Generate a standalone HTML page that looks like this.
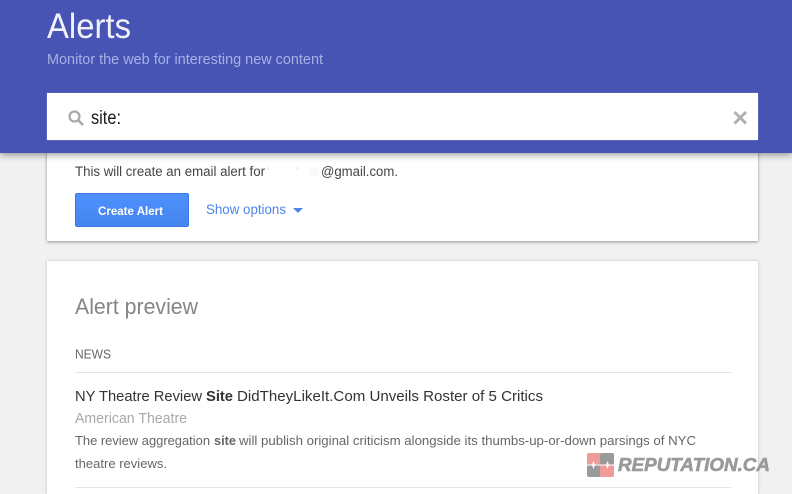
<!DOCTYPE html>
<html><head><meta charset="utf-8"><style>
html,body{margin:0;padding:0;width:792px;height:494px;overflow:hidden;background:#f1f1f1}
body{position:relative;font-family:"Liberation Sans",sans-serif}
.a{position:absolute}
svg{position:absolute;left:0;top:0;overflow:hidden}
text{font-family:"Liberation Sans",sans-serif}
</style></head><body>
<div class="a" style="left:47px;top:140px;width:711px;height:101px;background:#fff;box-shadow:0 1px 3px rgba(0,0,0,.4)"></div>
<div class="a" style="left:47px;top:261px;width:711px;height:233px;background:#fff;box-shadow:0 0 3px rgba(0,0,0,.22)"></div>
<div class="a" style="left:0;top:0;width:792px;height:153px;background:#4854b4;box-shadow:0 2px 7px rgba(0,0,0,.4)"></div>
<div class="a" style="left:47px;top:93px;width:711px;height:47px;background:#fff;box-shadow:0 0 1px rgba(255,255,255,.5)"></div>
<div class="a" style="left:75px;top:193px;width:112px;height:32px;background:linear-gradient(#4d90fe,#4585ef);border:1px solid #3b78e7;border-radius:2px"></div>
<div class="a" style="left:75px;top:372px;width:656px;height:1px;background:#e5e5e5"></div>
<div class="a" style="left:75px;top:487px;width:656px;height:1px;background:#e5e5e5"></div>
<svg width="792" height="494" viewBox="0 0 792 494">
<text x="47" y="38" font-size="35" fill="#f0f1fa" textLength="84" lengthAdjust="spacingAndGlyphs">Alerts</text>
<text x="47" y="64" font-size="15" fill="#a6b2e4" textLength="276" lengthAdjust="spacingAndGlyphs">Monitor the web for interesting new content</text>
<circle cx="74.500" cy="116.500" r="5" fill="none" stroke="#a8a8a8" stroke-width="2.200"/>
<path d="M78 120L83 125" stroke="#a8a8a8" stroke-width="2.600" fill="none"/>
<text x="91" y="124" font-size="19" fill="#1a1a1a" textLength="30" lengthAdjust="spacingAndGlyphs">site:</text>
<path d="M734.500 112L746 123.500M746 112L734.500 123.500" stroke="#b0b0b0" stroke-width="3" fill="none"/>
<text x="75" y="176" font-size="13.500" fill="#444" textLength="190" lengthAdjust="spacingAndGlyphs">This will create an email alert for</text>
<rect x="267" y="167" width="2" height="3" fill="#eee"/>
<rect x="296" y="167" width="3" height="3" fill="#f1f1f1"/>
<rect x="310" y="167" width="9" height="9" fill="#f9f9f9"/>
<text x="321" y="176" font-size="13.500" fill="#444" textLength="77" lengthAdjust="spacingAndGlyphs">@gmail.com.</text>
<text x="98" y="215" font-size="12" font-weight="700" fill="#fff" textLength="65" lengthAdjust="spacingAndGlyphs">Create Alert</text>
<text x="206" y="214" font-size="13.500" fill="#4d85e8" textLength="80" lengthAdjust="spacingAndGlyphs">Show options</text>
<path d="M293 208H303L298 213Z" fill="#4d85e8"/>
<text x="75" y="314" font-size="22.500" fill="#858585" textLength="123" lengthAdjust="spacingAndGlyphs">Alert preview</text>
<text x="75" y="358.500" font-size="12.500" fill="#666" textLength="36" lengthAdjust="spacingAndGlyphs">NEWS</text>
<text x="75" y="401" font-size="15" fill="#333" textLength="127" lengthAdjust="spacingAndGlyphs">NY Theatre Review</text>
<text x="206" y="401" font-size="15" font-weight="700" fill="#333" textLength="27" lengthAdjust="spacingAndGlyphs">Site</text>
<text x="237" y="401" font-size="15" fill="#333" textLength="306" lengthAdjust="spacingAndGlyphs">DidTheyLikeIt.Com Unveils Roster of 5 Critics</text>
<text x="75" y="423" font-size="14.500" fill="#a8a8a8" textLength="112" lengthAdjust="spacingAndGlyphs">American Theatre</text>
<text x="75" y="445" font-size="13" fill="#666" textLength="135" lengthAdjust="spacingAndGlyphs">The review aggregation</text>
<text x="214" y="445" font-size="13" font-weight="700" fill="#666" textLength="22" lengthAdjust="spacingAndGlyphs">site</text>
<text x="239" y="445" font-size="13" fill="#666" textLength="457" lengthAdjust="spacingAndGlyphs">will publish original criticism alongside its thumbs-up-or-down parsings of NYC</text>
<text x="75" y="468" font-size="13" fill="#666" textLength="92" lengthAdjust="spacingAndGlyphs">theatre reviews.</text>
<rect x="587" y="453" width="14" height="12" rx="2" fill="#f09b98"/>
<rect x="600" y="453" width="14" height="12" rx="2" fill="#9a9a9a"/>
<rect x="587" y="465" width="14" height="12" rx="2" fill="#9a9a9a"/>
<rect x="600" y="465" width="14" height="12" rx="2" fill="#f09b98"/>
<path d="M587 465H614" stroke="#fff" stroke-width="1"/>
<path d="M593.500 461L595 465L593.500 469L592 465ZM607.500 461L609 465L607.500 469L606 465Z" fill="#fff"/>
<text x="618" y="471" font-size="18" font-weight="700" font-style="italic" fill="#9a9a9a" stroke="#9a9a9a" stroke-width=".6" textLength="152" lengthAdjust="spacingAndGlyphs">REPUTATION.CA</text>
</svg>
</body></html>
